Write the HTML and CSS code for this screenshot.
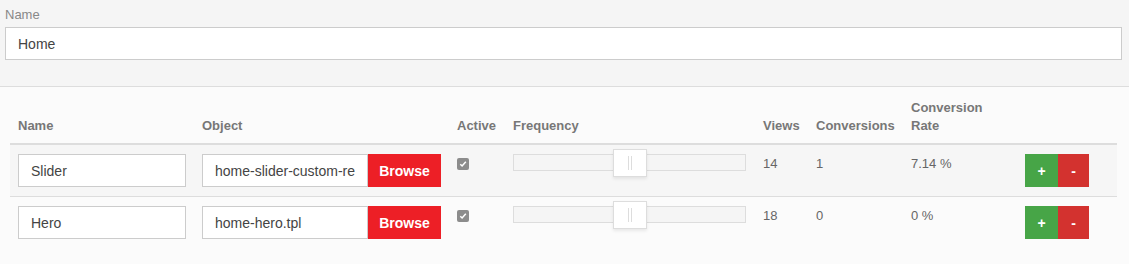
FILE: index.html
```html
<!DOCTYPE html>
<html lang="en">
<head>
  <meta charset="utf-8">
  <link rel="stylesheet" href="styles.css">
  <title>Home</title>
</head>
<body>
  <div class="page-head">
    <label for="page_name">Name</label>
    <input type="text" id="page_name" class="field wide" value="Home">
  </div>

  <div class="content">
    <table class="variants">
      <colgroup>
        <col style="width:184px">
        <col style="width:255px">
        <col style="width:56px">
        <col style="width:250px">
        <col style="width:53px">
        <col style="width:95px">
        <col style="width:114px">
        <col style="width:100px">
      </colgroup>
      <thead>
        <tr>
          <th>Name</th>
          <th>Object</th>
          <th>Active</th>
          <th>Frequency</th>
          <th>Views</th>
          <th>Conversions</th>
          <th>Conversion<br>Rate</th>
          <th></th>
        </tr>
      </thead>
      <tbody>
        <tr class="odd">
          <td><input type="text" class="field name" value="Slider"></td>
          <td>
            <div class="object">
              <input type="text" class="field" value="home-slider-custom-render.tpl">
              <button class="browse">Browse</button>
            </div>
          </td>
          <td><span class="check"><svg width="8" height="8" viewBox="0 0 8 8"><path d="M1.3 4.3 L3.1 6 L6.8 1.8" fill="none" stroke="#fff" stroke-width="1.5"/></svg></span></td>
          <td>
            <div class="slider">
              <div class="thumb" style="left:50%"><i></i><i></i></div>
            </div>
          </td>
          <td class="num">14</td>
          <td class="num">1</td>
          <td class="num">7.14 %</td>
          <td>
            <div class="actions">
              <button class="add">+</button><button class="remove">-</button>
            </div>
          </td>
        </tr>
        <tr>
          <td><input type="text" class="field name" value="Hero"></td>
          <td>
            <div class="object">
              <input type="text" class="field" value="home-hero.tpl">
              <button class="browse">Browse</button>
            </div>
          </td>
          <td><span class="check"><svg width="8" height="8" viewBox="0 0 8 8"><path d="M1.3 4.3 L3.1 6 L6.8 1.8" fill="none" stroke="#fff" stroke-width="1.5"/></svg></span></td>
          <td>
            <div class="slider">
              <div class="thumb" style="left:50%"><i></i><i></i></div>
            </div>
          </td>
          <td class="num">18</td>
          <td class="num">0</td>
          <td class="num">0 %</td>
          <td>
            <div class="actions">
              <button class="add">+</button><button class="remove">-</button>
            </div>
          </td>
        </tr>
      </tbody>
    </table>
  </div>
</body>
</html>
```

FILE: styles.css
```css
body {
  margin: 0;
  font-family: "Liberation Sans", Arial, sans-serif;
  font-size: 13px;
  line-height: 18px;
  color: #666;
  background: #fbfbfb;
}

/* top block */
.page-head {
  background: #f5f5f5;
  padding: 6px 7px 26px 5px;
  border-bottom: 1px solid #ddd;
}

.page-head label {
  display: block;
  color: #888;
  margin-bottom: 3px;
}

.field {
  box-sizing: border-box;
  height: 33px;
  border: 1px solid #ccc;
  background: #fff;
  padding: 0 12px;
  font: 14px "Liberation Sans", Arial, sans-serif;
  color: #444;
  outline: none;
}
.field.wide {
  display: block;
  width: 100%;
}
.field.name {
  display: block;
  width: 168px;
}

/* table */
.content {
  padding: 4px 12px 0 10px;
}

.variants {
  table-layout: fixed;
  width: 1107px;
  border-collapse: collapse;
}

.variants th {
  text-align: left;
  vertical-align: bottom;
  font-weight: bold;
  color: #777;
  padding: 8px 8px 8px;
  border-bottom: 2px solid #ddd;
}

.variants td {
  vertical-align: top;
  padding: 9px 8px;
  height: 33px;
}
.variants td.num {
  line-height: 20px;
}

.variants tbody tr + tr td {
  border-top: 1px solid #ddd;
}

.variants tr.odd td {
  background: #f6f6f6;
}

.object {
  display: flex;
}
.object .field {
  width: 166px;
}

.browse {
  width: 73px;
  height: 33px;
  border: 0;
  background: #ed1f26;
  color: #fff;
  font: bold 14px "Liberation Sans", Arial, sans-serif;
}

.check {
  display: flex;
  align-items: center;
  justify-content: center;
  width: 12px;
  height: 12px;
  margin-top: 4px;
  border-radius: 2px;
  background: #8c8c8c;
}

/* frequency slider */
.slider {
  position: relative;
  box-sizing: border-box;
  width: 233px;
  height: 17px;
  background: #f5f5f5;
  border: 1px solid #ddd;
}

.thumb {
  position: absolute;
  top: -6px;
  margin-left: -17px;
  box-sizing: border-box;
  width: 34px;
  height: 28px;
  background: #fff;
  border: 1px solid #ddd;
  box-shadow: 0 2px 3px rgba(0, 0, 0, 0.08);
  display: flex;
  justify-content: center;
  align-items: center;
  gap: 2px;
}
.thumb i {
  display: block;
  width: 1px;
  height: 14px;
  background: #ddd;
}

.actions {
  display: flex;
}
.actions button {
  height: 33px;
  border: 0;
  color: #fff;
  font: bold 14px "Liberation Sans", Arial, sans-serif;
}
.add {
  width: 33px;
  background: #47a547;
}
.remove {
  width: 31px;
  background: #d3322f;
}
```
